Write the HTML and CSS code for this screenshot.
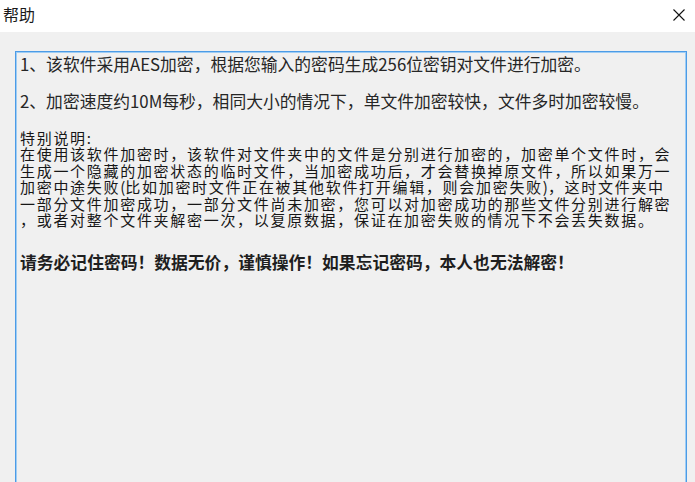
FILE: index.html
```html
<!DOCTYPE html>
<html lang="zh-CN">
<head>
<meta charset="utf-8">
<title>帮助</title>
<link rel="stylesheet" href="styles.css">
</head>
<body>
<div class="window">
  <div class="titlebar">
    <span class="title">帮助</span>
    <span class="close" aria-label="关闭">
      <svg width="12" height="12" viewBox="0 0 12 12"><path d="M0.5 0.5 L11.5 11.5 M11.5 0.5 L0.5 11.5" stroke="#111" stroke-width="1.1" fill="none"/></svg>
    </span>
  </div>
  <div class="content">
    <div class="textbox">
      <div class="line big p1">1、该软件采用AES加密，根据您输入的密码生成256位密钥对文件进行加密。</div>
      <div class="line big p2">2、加密速度约10M每秒，相同大小的情况下，单文件加密较快，文件多时加密较慢。</div>
      <div class="note">
        <div class="line">特别说明:</div>
        <div class="line">在使用该软件加密时，该软件对文件夹中的文件是分别进行加密的，加密单个文件时，会</div>
        <div class="line">生成一个隐藏的加密状态的临时文件，当加密成功后，才会替换掉原文件，所以如果万一</div>
        <div class="line">加密中途失败<span class="paren">(</span>比如加密时文件正在被其他软件打开编辑，则会加密失败<span class="paren">)</span>，这时文件夹中</div>
        <div class="line">一部分文件加密成功，一部分文件尚未加密，您可以对加密成功的那些文件分别进行解密</div>
        <div class="line">，或者对整个文件夹解密一次，以复原数据，保证在加密失败的情况下不会丢失数据。</div>
      </div>
      <div class="line big warn">请务必记住密码！数据无价，谨慎操作！如果忘记密码，本人也无法解密！</div>
    </div>
  </div>
</div>
</body>
</html>
```

FILE: styles.css
```css
html, body {
  margin: 0;
  padding: 0;
  background: #f0f0f0;
  overflow: hidden;
}

.window {
  width: 695px;
  height: 482px;
  display: flex;
  flex-direction: column;
  font-family: "Noto Sans CJK SC", "Noto Sans", sans-serif;
  color: #1e1e1e;
  overflow: hidden;
}

.titlebar {
  height: 32px;
  flex: none;
  background: #ffffff;
  display: flex;
  align-items: center;
  justify-content: space-between;
  padding: 0 10px 4px 3px;
  box-sizing: border-box;
}

.title {
  font-size: 16px;
  line-height: 20px;
  color: #1a1a1a;
}

.close {
  display: flex;
  width: 12px;
  height: 12px;
  margin-top: 2px;
}

.content {
  flex: 1;
  background: #f0f0f0;
  padding: 19px 8px 0 15px;
}

.textbox {
  height: 460px;
  border: 1px solid #4c9be6;
  box-shadow: inset 0 0 0 1px #9fcdf4;
  background: #f0f0f0;
  padding: 2px 0 0 4px;
  box-sizing: border-box;
}

.line {
  white-space: nowrap;
}

.big {
  font-size: 16.8px;
  line-height: 20px;
  color: #262626;
}

.p1 {
  margin-top: 0;
}

.p2 {
  margin-top: 17px;
}

.note {
  margin-top: 18.5px;
  font-size: 15px;
  letter-spacing: 1.7px;
  line-height: 16.6px;
  color: #161616;
}

.paren {
  letter-spacing: 0;
}

.warn {
  margin-top: 22.7px;
  font-weight: 700;
  font-size: 16.8px;
  color: #1e1e1e;
}
```
